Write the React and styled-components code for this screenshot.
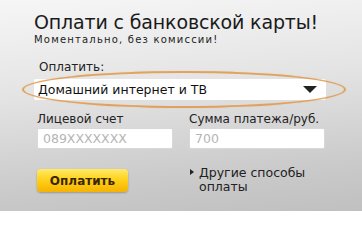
import React from "react";
import styled, { createGlobalStyle } from "styled-components";

const Global = createGlobalStyle`
  html, body { margin: 0; padding: 0; }
  body { width: 362px; height: 211px; overflow: hidden; }
`;

const Panel = styled.div`
  width: 362px;
  height: 211px;
  box-sizing: border-box;
  padding: 11px 36px 0 34px;
  background: linear-gradient(175deg, #f6f6f6 0%, #e4e4e4 40%, #cacaca 80%, #c0c0c0 100%);
  font-family: "DejaVu Sans", Verdana, sans-serif;
  color: #1d1d1d;
  display: flex;
  flex-direction: column;
  overflow: hidden;
`;

const Title = styled.h1`
  margin: 0;
  font-size: 19px;
  font-weight: normal;
  line-height: 23px;
  letter-spacing: -0.15px;
  white-space: nowrap;
  color: #1a1a1a;
`;

const Subtitle = styled.div`
  font-size: 10px;
  line-height: 12px;
  letter-spacing: 1.2px;
  white-space: nowrap;
  color: #222;
`;

const Label = styled.div`
  font-size: 12px;
  line-height: 14px;
  white-space: nowrap;
  color: #222;
  padding-left: ${(p) => p.$indent || 0}px;
  margin-top: ${(p) => p.$top || 0}px;
`;

const SelectWrap = styled.div`
  position: relative;
  margin-top: 5px;
`;

const Select = styled.div`
  height: 21px;
  background: #fff;
  display: flex;
  align-items: center;
  justify-content: space-between;
  padding: 0 9px 0 4px;
  font-size: 12.5px;
  color: #111;
  border-radius: 2px;
`;

const Ring = styled.div`
  position: absolute;
  left: -12px;
  right: -20px;
  top: -8px;
  bottom: -8px;
  border: 2px solid rgba(226, 150, 70, 0.85);
  border-radius: 50%;
  pointer-events: none;
  box-shadow: 0 0 1px rgba(226, 150, 70, 0.6);
`;

const Fields = styled.div`
  display: grid;
  grid-template-columns: 136px 136px;
  column-gap: 16px;
  margin-top: 12px;
  padding-left: 3px;
`;

const Field = styled.div`
  display: flex;
  flex-direction: column;
  gap: 2px;
`;

const Input = styled.div`
  height: 21px;
  background: #fff;
  border: 1px solid #d8d8d8;
  border-radius: 2px;
  box-sizing: border-box;
  display: flex;
  align-items: center;
  padding-left: 5px;
  font-size: 12.5px;
  color: #b5b5b5;
`;

const Bottom = styled.div`
  display: grid;
  grid-template-columns: 136px 136px;
  column-gap: 16px;
  margin-top: 17px;
  padding-left: 3px;
`;

const PayButton = styled.button`
  width: 91px;
  height: 23px;
  border: none;
  border-radius: 4px;
  background: linear-gradient(#ffea6a 0%, #ffd21c 45%, #f5b300 100%);
  box-shadow: 0 1px 2px rgba(0, 0, 0, 0.25);
  font-family: "DejaVu Sans", Verdana, sans-serif;
  font-weight: bold;
  font-size: 12px;
  color: #3b2600;
  padding: 0;
  margin-top: 3px;
`;

const Other = styled.div`
  display: flex;
  gap: 4px;
  font-size: 12.5px;
  line-height: 14px;
  color: #222;
`;

export default function App() {
  return (
    <>
      <Global />
      <Panel>
        <Title>Оплати с банковской карты!</Title>
        <Subtitle>Моментально, без комиссии!</Subtitle>
        <Label $indent={5} $top={14}>Оплатить:</Label>
        <SelectWrap>
          <Select>
            <span>Домашний интернет и ТВ</span>
            <svg width="14" height="7" viewBox="0 0 14 7">
              <path d="M0 0 H14 L7 7 Z" fill="#222" />
            </svg>
          </Select>
          <Ring />
        </SelectWrap>
        <Fields>
          <Field>
            <Label>Лицевой счет</Label>
            <Input>089XXXXXXX</Input>
          </Field>
          <Field>
            <Label>Сумма платежа/руб.</Label>
            <Input>700</Input>
          </Field>
        </Fields>
        <Bottom>
          <div>
            <PayButton>Оплатить</PayButton>
          </div>
          <Other>
            <svg width="6" height="14" viewBox="0 0 6 14" style={{ flex: "none" }}>
              <path d="M1 3 L5 6 L1 9 Z" fill="#222" />
            </svg>
            <span>Другие способы<br />оплаты</span>
          </Other>
        </Bottom>
      </Panel>
    </>
  );
}
